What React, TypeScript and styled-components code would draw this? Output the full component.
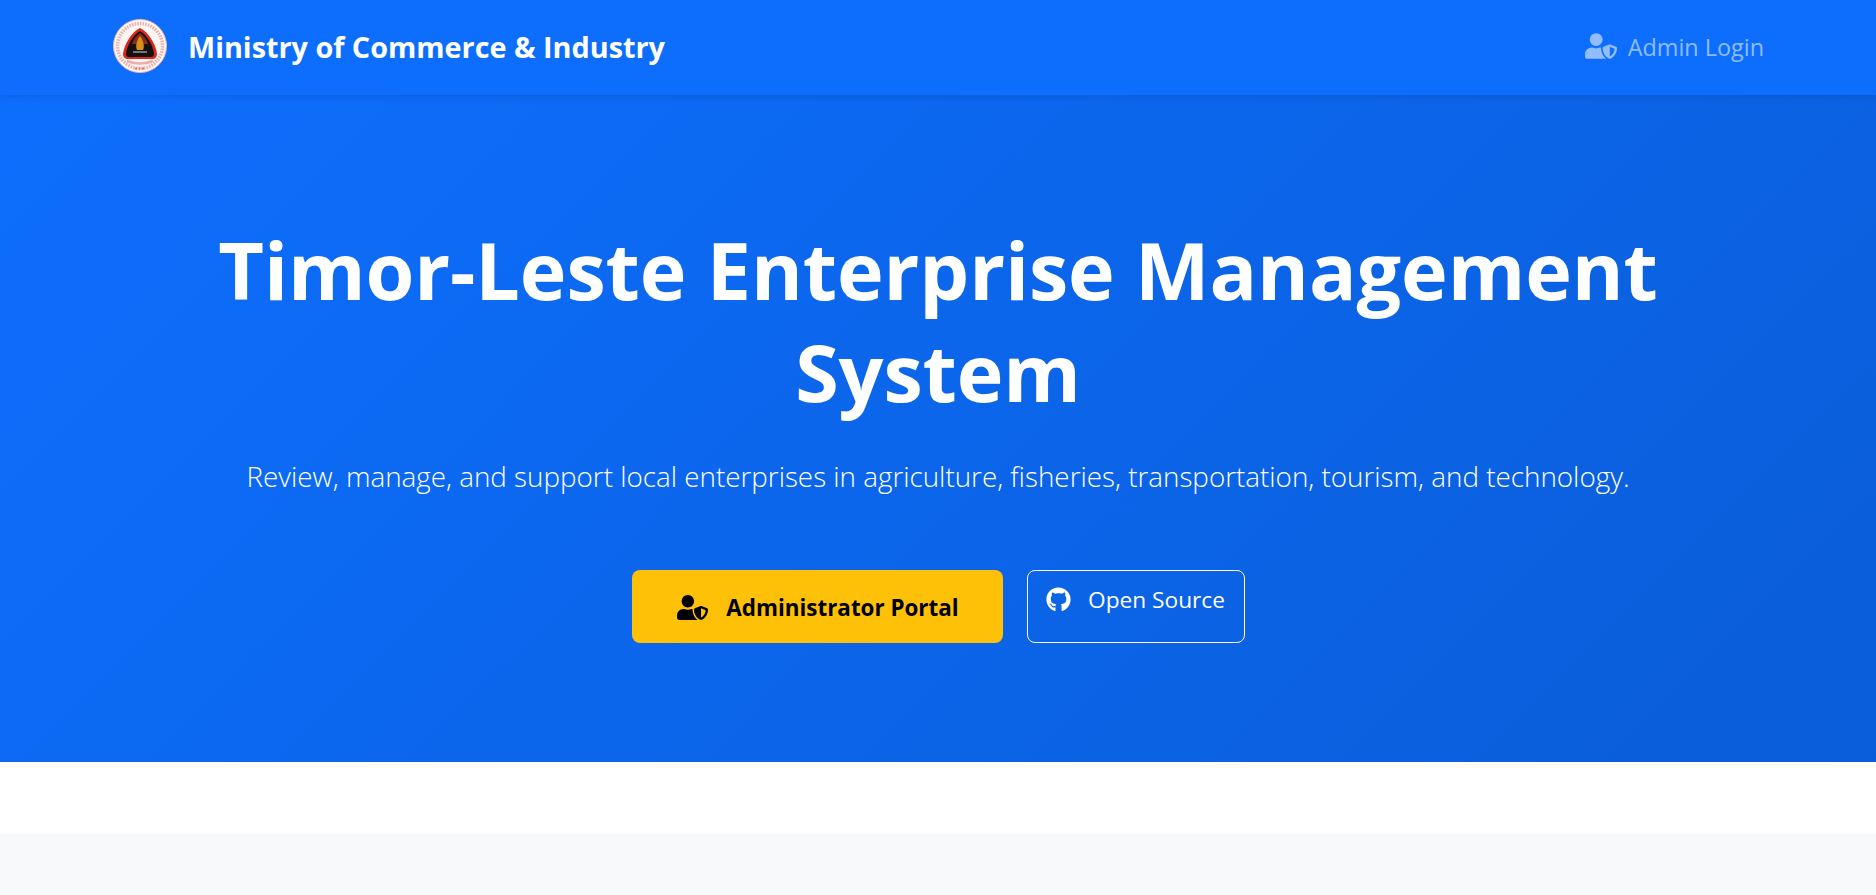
import React from "react";
import styled, { createGlobalStyle } from "styled-components";
import { FaUserShield, FaGithub } from "react-icons/fa";

const fontStack = `"Open Sans", "Noto Sans", "Liberation Sans", sans-serif`;

const Global = createGlobalStyle`
  html, body { margin: 0; padding: 0; background: #fff; }
  body { font-family: ${fontStack}; }
`;

const Page = styled.div`
  min-height: 895px;
  display: flex;
  flex-direction: column;
  overflow: hidden;
`;

const Navbar = styled.nav`
  position: relative;
  z-index: 2;
  height: 95px;
  box-sizing: border-box;
  padding: 0 112px 0 113px;
  display: flex;
  align-items: center;
  justify-content: space-between;
  background: #0d6efd;
  box-shadow: 0 2px 6px rgba(0, 0, 0, 0.1);
`;

const Brand = styled.a`
  display: flex;
  align-items: center;
  gap: 21px;
  margin-top: -3px;
  color: #fff;
  font-size: 28.8px;
  font-weight: 700;
`;

const Logo = styled.svg`
  width: 54px;
  height: 54px;
  display: block;
`;

const NavLink = styled.a`
  display: flex;
  align-items: center;
  gap: 11px;
  margin-top: -1px;
  color: rgba(255, 255, 255, 0.55);
  font-size: 23.4px;
  svg { width: 32px; height: 26px; margin-top: -2px; }
`;

const Hero = styled.section`
  height: 667px;
  box-sizing: border-box;
  padding-top: 124px;
  display: flex;
  flex-direction: column;
  align-items: center;
  text-align: center;
  color: #fff;
  background: linear-gradient(135deg, #0d6efd 0%, #0a5dd8 100%);
`;

const Title = styled.h1`
  margin: 0;
  width: 1500px;
  font-size: 79px;
  line-height: 102px;
  letter-spacing: -0.1px;
  font-weight: 700;
`;

const Lead = styled.p`
  margin: 32px 0 0;
  font-size: 27.8px;
  line-height: 42px;
  font-weight: 300;
`;

const Actions = styled.div`
  display: flex;
  gap: 24px;
  margin-top: 73px;
`;

const PrimaryButton = styled.a`
  box-sizing: border-box;
  width: 371px;
  height: 73px;
  padding: 2px 0 0 2px;
  display: flex;
  align-items: center;
  justify-content: center;
  gap: 18px;
  border-radius: 8px;
  background: #ffc107;
  color: #000;
  font-size: 22.4px;
  font-weight: 700;
  svg { width: 31px; height: 25px; }
`;

const OutlineButton = styled.a`
  box-sizing: border-box;
  width: 218px;
  height: 73px;
  padding-top: 13px;
  display: flex;
  align-items: flex-start;
  justify-content: center;
  gap: 17px;
  border: 1px solid #fff;
  border-radius: 8px;
  color: #fff;
  font-size: 22.7px;
  svg { width: 25px; height: 25px; margin-top: 3px; }
`;

const Spacer = styled.div`
  height: 72px;
  background: #fff;
`;

const Band = styled.div`
  flex: 1;
  background: #f8f9fa;
`;

export default function App() {
  return (
    <Page>
      <Global />
      <Navbar>
        <Brand>
          <Logo viewBox="0 0 54 54">
            <circle cx="27" cy="27" r="26.5" fill="#fdf6f4" stroke="#f0b8b0" />
            <circle cx="27" cy="27" r="22.5" fill="none" stroke="#e8b0a8" strokeWidth="3.5" strokeDasharray="1.5 1.2" />
            <path d="M27 9 C35 13 43 25 44 35 C44 38 42 40 39 40 L15 40 C12 40 10 38 10 35 C11 25 19 13 27 9Z" fill="#d8261c" />
            <path d="M27 12 C34 16 40 26 41 35 C41 37 40 38 38 38 L16 38 C14 38 13 37 13 35 C14 26 20 16 27 12Z" fill="#141210" />
            <path d="M27 14 C31 17 34 21 35 25 L19 25 C20 21 23 17 27 14Z" fill="#8a2a18" />
            <path d="M27 17 C30 21 32 27 30 31 L24 31 C22 27 24 21 27 17Z" fill="#d8901c" />
            <path d="M20 33 H34" stroke="#999" strokeWidth="1.5" />
            <path d="M14 42 Q27 47 40 42" fill="none" stroke="#eab0a8" strokeWidth="2.5" />
            <path d="M22 49.5 H32" stroke="#d87868" strokeWidth="2" strokeDasharray="2 1.5" />
          </Logo>
          Ministry of Commerce &amp; Industry
        </Brand>
        <NavLink><FaUserShield />Admin Login</NavLink>
      </Navbar>
      <Hero>
        <Title>Timor-Leste Enterprise Management System</Title>
        <Lead>Review, manage, and support local enterprises in agriculture, fisheries, transportation, tourism, and technology.</Lead>
        <Actions>
          <PrimaryButton><FaUserShield />Administrator Portal</PrimaryButton>
          <OutlineButton><FaGithub />Open Source</OutlineButton>
        </Actions>
      </Hero>
      <Spacer />
      <Band />
    </Page>
  );
}
